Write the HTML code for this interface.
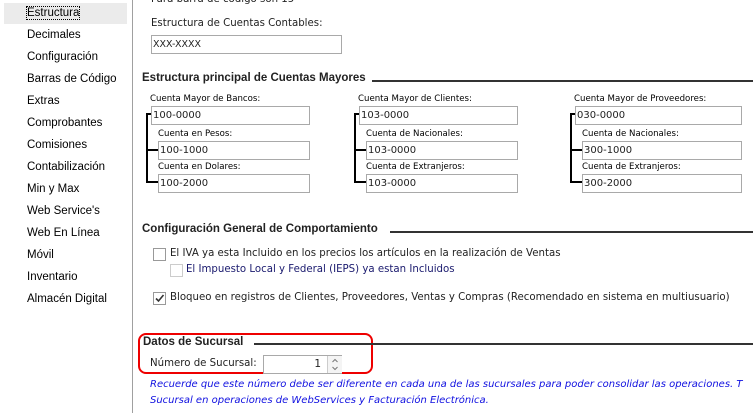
<!DOCTYPE html><html><head><style>
body{margin:0;width:753px;height:413px;overflow:hidden;background:#fff;font-family:"DejaVu Sans","Liberation Sans",sans-serif;position:relative}
.a{position:absolute;white-space:nowrap}
.side{font-size:11.5px;color:#000;font-family:"Liberation Sans",sans-serif;left:27px}
.lbl{font-size:8.6px;font-family:"DejaVu Sans",sans-serif;color:#000}
.inp{position:absolute;border:1px solid #a9a9a9;background:#fff;height:17px;box-sizing:border-box;font-size:10px;line-height:17px;padding-left:1px;color:#222}
.t{font-weight:bold;font-size:11.5px;color:#222;font-family:"Liberation Sans",sans-serif}
.ln{position:absolute;height:2px;background:#333}
.br{position:absolute;border-left:2px solid #000}
.tk{position:absolute;height:2px;background:#000}
.cb{position:absolute;width:11px;height:11px;border:1px solid #999;background:#fff}
.tx{font-size:10.2px;color:#222}
</style></head><body>
<div class="a" style="left:4px;top:3px;width:123px;height:21px;background:#ebebeb"></div>
<div class="a" style="left:132px;top:0;width:1px;height:413px;background:#a0a0a0"></div>
<div class="a side" style="top:7px;outline:1px dotted #000">Estructura</div>
<div class="a side" style="top:29px">Decimales</div>
<div class="a side" style="top:51px">Configuración</div>
<div class="a side" style="top:73px">Barras de Código</div>
<div class="a side" style="top:95px">Extras</div>
<div class="a side" style="top:117px">Comprobantes</div>
<div class="a side" style="top:139px">Comisiones</div>
<div class="a side" style="top:161px">Contabilización</div>
<div class="a side" style="top:183px">Min y Max</div>
<div class="a side" style="top:205px">Web Service's</div>
<div class="a side" style="top:227px">Web En Línea</div>
<div class="a side" style="top:249px">Móvil</div>
<div class="a side" style="top:271px">Inventario</div>
<div class="a side" style="top:293px">Almacén Digital</div>

<div class="a tx" style="left:151px;top:-6px">Para barra de código son 15</div>
<div class="a tx" style="left:151px;top:18px">Estructura de Cuentas Contables:</div>
<div class="inp" style="left:151px;top:35px;width:191px;height:19px;font-size:9.5px">XXX-XXXX</div>

<div class="a t" style="left:142px;top:72px">Estructura principal de Cuentas Mayores</div>
<div class="ln" style="left:372px;top:80px;width:381px"></div>

<div class="a lbl" style="left:150px;top:94px">Cuenta Mayor de Bancos:</div>
<div class="inp" style="left:151px;top:106px;width:159px;height:19px">100-0000</div>
<div class="a lbl" style="left:158px;top:129px">Cuenta en Pesos:</div>
<div class="inp" style="left:158px;top:141px;width:152px;height:19px">100-1000</div>
<div class="a lbl" style="left:158px;top:162px">Cuenta en Dolares:</div>
<div class="inp" style="left:158px;top:174px;width:152px;height:19px">100-2000</div>
<div class="br" style="left:146px;top:113px;height:70px"></div>
<div class="tk" style="left:146px;top:113px;width:5px"></div>
<div class="tk" style="left:146px;top:149px;width:12px"></div>
<div class="tk" style="left:146px;top:181px;width:12px"></div>

<div class="a lbl" style="left:358px;top:94px">Cuenta Mayor de Clientes:</div>
<div class="inp" style="left:359px;top:106px;width:159px;height:19px">103-0000</div>
<div class="a lbl" style="left:366px;top:129px">Cuenta de Nacionales:</div>
<div class="inp" style="left:366px;top:141px;width:152px;height:19px">103-0000</div>
<div class="a lbl" style="left:366px;top:162px">Cuenta de Extranjeros:</div>
<div class="inp" style="left:366px;top:174px;width:152px;height:19px">103-0000</div>
<div class="br" style="left:354px;top:113px;height:70px"></div>
<div class="tk" style="left:354px;top:113px;width:5px"></div>
<div class="tk" style="left:354px;top:149px;width:12px"></div>
<div class="tk" style="left:354px;top:181px;width:12px"></div>

<div class="a lbl" style="left:574px;top:94px">Cuenta Mayor de Proveedores:</div>
<div class="inp" style="left:575px;top:106px;width:167px;height:19px">030-0000</div>
<div class="a lbl" style="left:582px;top:129px">Cuenta de Nacionales:</div>
<div class="inp" style="left:582px;top:141px;width:160px;height:19px">300-1000</div>
<div class="a lbl" style="left:582px;top:162px">Cuenta de Extranjeros:</div>
<div class="inp" style="left:582px;top:174px;width:160px;height:19px">300-2000</div>
<div class="br" style="left:570px;top:113px;height:70px"></div>
<div class="tk" style="left:570px;top:113px;width:5px"></div>
<div class="tk" style="left:570px;top:149px;width:12px"></div>
<div class="tk" style="left:570px;top:181px;width:12px"></div>

<div class="a t" style="left:142px;top:223px">Configuración General de Comportamiento</div>
<div class="ln" style="left:390px;top:231px;width:363px"></div>
<div class="cb" style="left:153px;top:248px"></div>
<div class="a tx" style="left:170px;top:248px">El IVA ya esta Incluido en los precios los artículos en la realización de Ventas</div>
<div class="cb" style="left:170px;top:264px;border-color:#ccc"></div>
<div class="a tx" style="left:186px;top:264px;color:#1a1a6e">El Impuesto Local y Federal (IEPS) ya estan Incluidos</div>
<div class="cb" style="left:153px;top:292px"><svg width="11" height="11" style="position:absolute;left:0;top:0"><path d="M2 5.5L4.5 8L9.5 2" stroke="#333" stroke-width="1.6" fill="none"/></svg></div>
<div class="a tx" style="left:170px;top:292px">Bloqueo en registros de Clientes, Proveedores, Ventas y Compras (Recomendado en sistema en multiusuario)</div>

<div class="a" style="left:138px;top:333px;width:231px;height:37px;border:2px solid #e00;border-radius:8px"></div>
<div class="a t" style="left:143px;top:336px">Datos de Sucursal</div>
<div class="ln" style="left:254px;top:343px;width:499px"></div>
<div class="a tx" style="left:150px;top:358px">Número de Sucursal:</div>
<div class="inp" style="left:263px;top:355px;width:79px;height:19px;text-align:right;padding-right:20px;font-size:10.5px">1</div>
<div class="a" style="left:327px;top:356px;width:14px;height:17px;border-left:1px solid #ccc;background:#f4f4f4"><svg width="14" height="17"><path d="M4.5 6L7 3.5L9.5 6M4.5 11L7 13.5L9.5 11" stroke="#777" fill="none"/></svg></div>
<div class="a" style="left:150px;top:379px;font-size:10px;font-style:italic;color:#1010e0">Recuerde que este número debe ser diferente en cada una de las sucursales para poder consolidar las operaciones. T</div>
<div class="a" style="left:150px;top:395px;font-size:10px;font-style:italic;color:#1010e0">Sucursal en operaciones de WebServices y Facturación Electrónica.</div>
</body></html>
